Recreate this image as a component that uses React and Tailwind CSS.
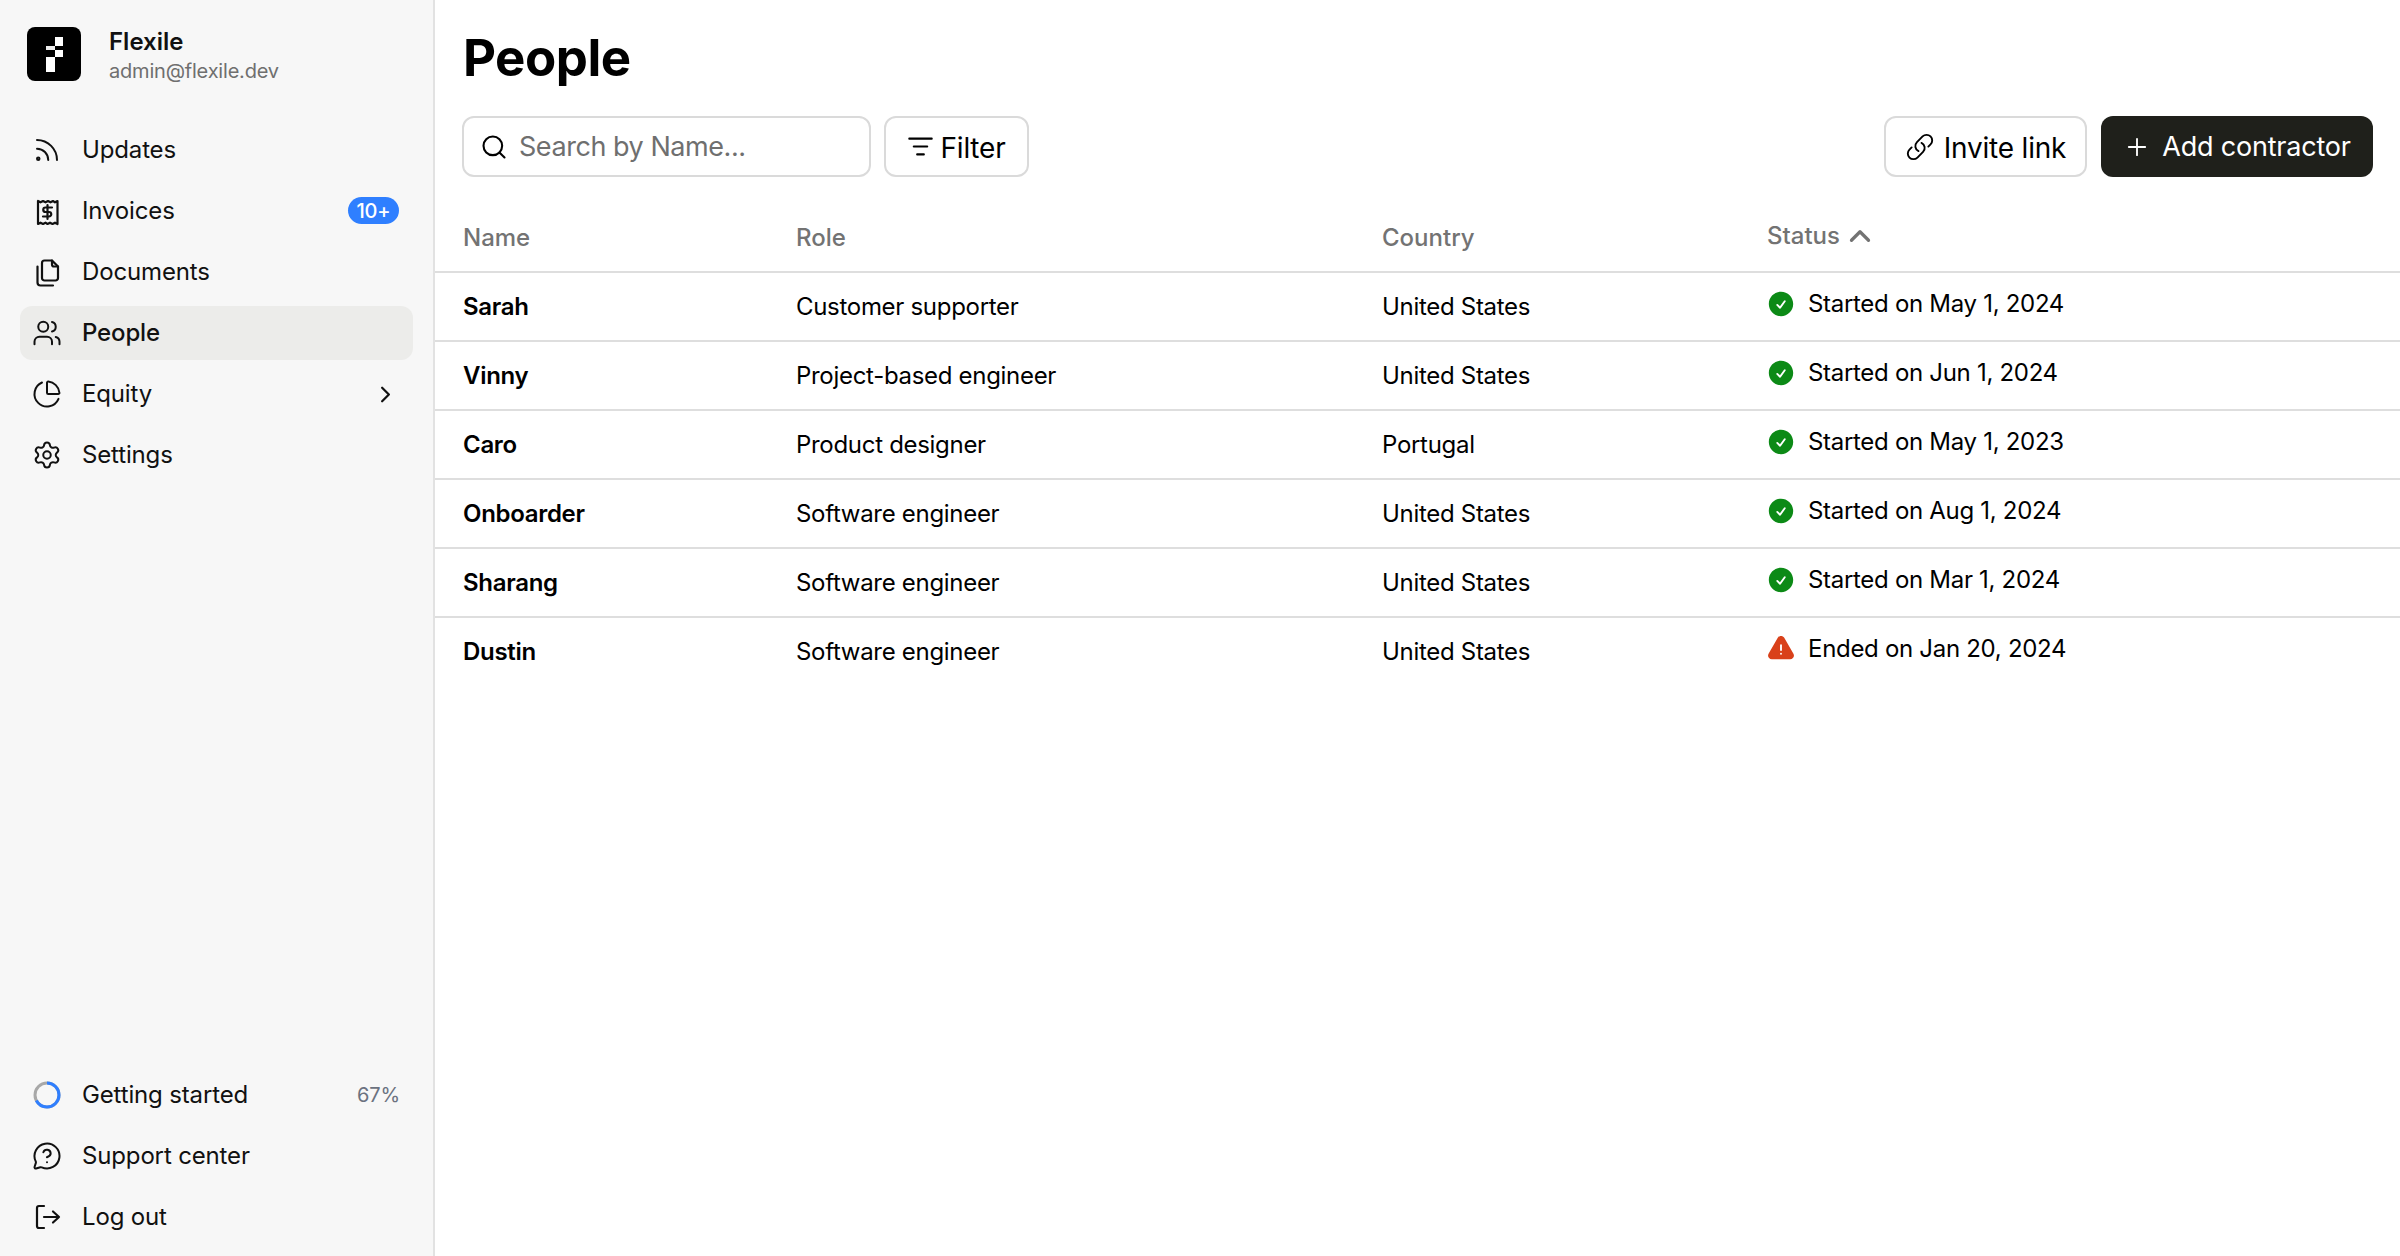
import React from 'react';
import { Rss, Users, ChartPie, Settings, ChevronRight, ChevronUp, Search, ListFilter, MessageCircleQuestion, Plus } from 'lucide-react';
import { HiCheckCircle, HiExclamationTriangle, HiOutlineLink } from 'react-icons/hi2';

const FlexileLogo = () => (
  <svg width="54" height="54" viewBox="0 0 54 54" className="shrink-0">
    <rect width="54" height="54" rx="8" fill="#000" />
    <rect x="28" y="10" width="8" height="9" fill="#fff" />
    <rect x="19" y="19" width="9" height="4" fill="#eee" />
    <rect x="28" y="23" width="8" height="7" fill="#fff" />
    <rect x="19" y="30" width="9" height="15" fill="#fff" />
  </svg>
);

const InvoiceIcon = () => (
  <svg width="30" height="30" viewBox="0 0 30 30" fill="none" stroke="currentColor" strokeWidth="2.2" strokeLinejoin="round" strokeLinecap="round">
    <path d="M6 5v23l2.500-1.300 2.500 1.300 2.500-1.300 2 1.300 2.500-1.300 2.500 1.300 2.500-1.300 2.500 1.300V5l-2.500 1.300L21 5l-2.500 1.300L16 5l-2.500 1.300L11 5 8.500 6.300z" />
    <path d="M20 11.500h-6.500a2.200 2.200 0 0 0 0 4.500h3.500a2.200 2.200 0 0 1 0 4.500h-6M15.500 9v14" />
  </svg>
);

const DocumentsIcon = () => (
  <svg width="30" height="30" viewBox="0 0 30 30" fill="none" stroke="currentColor" strokeWidth="2.2" strokeLinejoin="round" strokeLinecap="round">
    <path d="M12.500 3.500H20l6 6v11.500a2.500 2.500 0 0 1-2.500 2.500h-11A2.500 2.500 0 0 1 10 21V6a2.500 2.500 0 0 1 2.500-2.500z" />
    <path d="M20 3.500v4a2 2 0 0 0 2 2h4" />
    <path d="M5.500 9.500V25.500a3 3 0 0 0 3 3H21" />
  </svg>
);

const LogOutIcon = () => (
  <svg width="30" height="30" viewBox="0 0 30 30" fill="none" stroke="currentColor" strokeWidth="2.2" strokeLinejoin="round" strokeLinecap="round">
    <path d="M12 4H7a2 2 0 0 0-2 2v18a2 2 0 0 0 2 2h5" />
    <path d="M12 15h15M21 9.500l6 5.500-6 5.500" />
  </svg>
);

const ProgressRing = () => (
  <svg width="30" height="30" viewBox="0 0 30 30" fill="none" strokeWidth="3">
    <circle cx="15" cy="15" r="12" stroke="#a8a8a8" />
    <circle cx="15" cy="15" r="12" stroke="#2f7fff" strokeDasharray="50.500 75.400" transform="rotate(-90 15 15)" />
  </svg>
);

const navTop = [
  { label: 'Updates', icon: <Rss size={30} strokeWidth={1.6} /> },
  { label: 'Invoices', icon: <InvoiceIcon />, badge: '10+' },
  { label: 'Documents', icon: <DocumentsIcon /> },
  { label: 'People', icon: <Users size={30} strokeWidth={1.6} />, active: true },
  { label: 'Equity', icon: <ChartPie size={30} strokeWidth={1.6} />, chevron: true },
  { label: 'Settings', icon: <Settings size={30} strokeWidth={1.6} /> },
];

const navBottom = [
  { label: 'Getting started', icon: <ProgressRing />, percent: '67%' },
  { label: 'Support center', icon: <MessageCircleQuestion size={30} strokeWidth={1.6} /> },
  { label: 'Log out', icon: <LogOutIcon /> },
];

const people = [
  { name: 'Sarah', role: 'Customer supporter', country: 'United States', status: 'Started on May 1, 2024' },
  { name: 'Vinny', role: 'Project-based engineer', country: 'United States', status: 'Started on Jun 1, 2024' },
  { name: 'Caro', role: 'Product designer', country: 'Portugal', status: 'Started on May 1, 2023' },
  { name: 'Onboarder', role: 'Software engineer', country: 'United States', status: 'Started on Aug 1, 2024' },
  { name: 'Sharang', role: 'Software engineer', country: 'United States', status: 'Started on Mar 1, 2024' },
  { name: 'Dustin', role: 'Software engineer', country: 'United States', status: 'Ended on Jan 20, 2024', ended: true },
];

function NavItem({ item }) {
  return (
    <a className={`flex items-center h-[54px] pl-[12px] pr-[14px] gap-[20px] rounded-[12px] text-[24px] tracking-[-0.15px] text-[#111] ${item.active ? 'bg-[#ececea] font-medium' : ''}`}>
      <span className="w-[30px] h-[30px] shrink-0">{item.icon}</span>
      <span>{item.label}</span>
      {item.badge && (
        <span className="ml-auto h-[27px] w-[51px] flex items-center justify-center rounded-full bg-[#2f7fff] text-white text-[20px] font-medium">{item.badge}</span>
      )}
      {item.percent && <span className="ml-auto -mr-[1px] text-[20px] text-[#6b7280]">{item.percent}</span>}
      {item.chevron && <ChevronRight size={27} strokeWidth={2} className="ml-auto" />}
    </a>
  );
}

function Sidebar() {
  return (
    <aside className="w-[435px] shrink-0 h-full bg-[#f7f7f7] border-r-2 border-[#e2e2e2] flex flex-col justify-between">
      <div>
        <div className="flex items-center gap-[28px] pl-[27px] pt-[27px] h-[108px] pb-[27px]">
          <FlexileLogo />
          <div className="flex flex-col mt-[3px]">
            <span className="text-[24px] leading-[30px] font-semibold text-[#111]">Flexile</span>
            <span className="text-[20px] leading-[28px] tracking-[-0.2px] text-[#6f6f6f]">admin@flexile.dev</span>
          </div>
        </div>
        <nav className="flex flex-col gap-[7.200px] px-[20px] mt-[14.500px]">
          {navTop.map((item) => <NavItem key={item.label} item={item} />)}
        </nav>
      </div>
      <nav className="flex flex-col gap-[7.200px] px-[20px] pb-[12px]">
        {navBottom.map((item) => <NavItem key={item.label} item={item} />)}
      </nav>
    </aside>
  );
}

function OutlineButton({ children }) {
  return (
    <button className="h-[61px] flex items-center justify-center border-2 border-[#dadada] rounded-[12px] text-[28px] tracking-[-0.2px] text-black bg-white">
      {children}
    </button>
  );
}

export default function App() {
  return (
    <div className="flex h-screen bg-white font-['Inter',sans-serif] overflow-hidden">
      <Sidebar />
      <main className="flex-1 min-w-0">
        <h1 className="h-[116px] pl-[28px] flex items-center text-[51px] font-bold text-black tracking-[-0.5px]">People</h1>
        <div className="flex items-center justify-between pl-[27px] pr-[27px]">
          <div className="flex gap-[13px]">
            <div className="w-[409px] h-[61px] flex items-center gap-[11px] pl-[16px] border-2 border-[#dadada] rounded-[12px]">
              <Search size={28} strokeWidth={1.8} className="text-black" />
              <input placeholder="Search by Name..." className="w-[320px] outline-none pt-[2px] text-[27px] tracking-[-0.45px] placeholder:text-[#6f6f6f]" />
            </div>
            <OutlineButton>
              <span className="w-[141px] flex items-center justify-center gap-[6px]">
                <ListFilter size={27} strokeWidth={1.8} />
                <span className="pt-[2px]">Filter</span>
              </span>
            </OutlineButton>
          </div>
          <div className="flex gap-[14px]">
            <OutlineButton>
              <span className="w-[199px] flex items-center justify-center gap-[9px]">
                <HiOutlineLink size={30} />
                <span className="pt-[2px]">Invite link</span>
              </span>
            </OutlineButton>
            <button className="w-[272px] h-[61px] flex items-center justify-center gap-[11px] rounded-[12px] bg-[#1f201b] text-white text-[27px] tracking-[-0.2px]">
              <Plus size={28} strokeWidth={1.6} />
              <span className="pt-[2px]">Add contractor</span>
            </button>
          </div>
        </div>
        <table className="w-full table-fixed mt-[26px] text-[24px] text-black">
          <colgroup>
            <col className="w-[361px]" />
            <col className="w-[586px]" />
            <col className="w-[385px]" />
            <col />
          </colgroup>
          <thead>
            <tr className="h-[69px] border-b-2 border-[#dedede] text-left text-[#737373]">
              <th className="pl-[28px] pt-[2px] font-medium">Name</th>
              <th className="pt-[2px] font-medium">Role</th>
              <th className="pt-[2px] font-medium">Country</th>
              <th className="font-medium">
                <span className="flex items-center gap-[3px] pb-[2px]">Status <ChevronUp size={34} strokeWidth={2.300} className="-my-[4px]" /></span>
              </th>
            </tr>
          </thead>
          <tbody className="tracking-[-0.3px]">
            {people.map((p, i) => (
              <tr key={p.name} className={`h-[69px] ${i < people.length - 1 ? 'border-b-2 border-[#dedede]' : ''}`}>
                <td className="pl-[28px] font-semibold">{p.name}</td>
                <td>{p.role}</td>
                <td>{p.country}</td>
                <td>
                  <span className="flex items-center gap-[12px] pb-[6px] -ml-[1px]">
                    {p.ended
                      ? <HiExclamationTriangle size={30} className="text-[#d9411a]" />
                      : <HiCheckCircle size={30} className="text-[#0c8a16]" />}
                    {p.status}
                  </span>
                </td>
              </tr>
            ))}
          </tbody>
        </table>
      </main>
    </div>
  );
}
